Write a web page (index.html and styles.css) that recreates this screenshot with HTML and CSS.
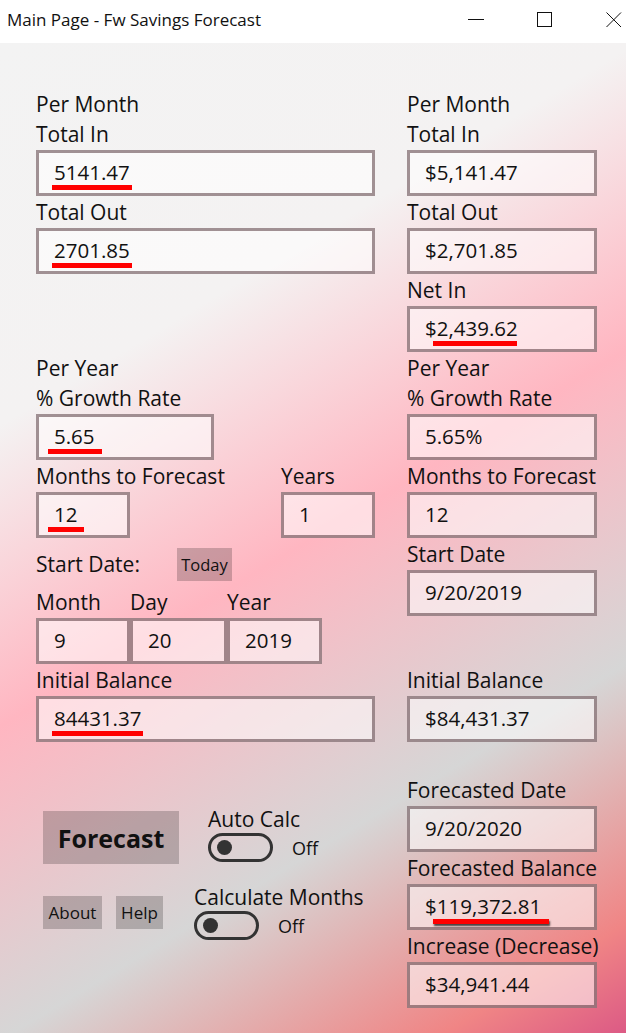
FILE: index.html
```html
<!DOCTYPE html>
<html lang="en">
<head>
    <meta charset="UTF-8">
    <meta name="viewport" content="width=device-width, initial-scale=1.0">
    <title>Main Page - Fw Savings Forecast</title>
    <link rel="stylesheet" href="styles.css">
</head>
<body>
    <div class="titlebar">
        <span class="title">Main Page - Fw Savings Forecast</span>
        <div class="controls">
            <svg width="16" height="16" viewBox="0 0 16 16"><path d="M0 7.5H16" stroke="#111" stroke-width="1"/></svg>
            <svg width="16" height="16" viewBox="0 0 16 16"><rect x="0.5" y="0.5" width="14" height="14" fill="none" stroke="#111" stroke-width="1"/></svg>
            <svg width="16" height="16" viewBox="0 0 16 16"><path d="M0.5 0.5L15 15M15 0.5L0.5 15" stroke="#111" stroke-width="1"/></svg>
        </div>
    </div>

    <main class="page">
        <!-- inputs -->
        <section class="col col-left">
            <div class="lbl">Per Month</div>
            <div class="lbl">Total In</div>
            <div class="field"><span class="mark">5141.47</span></div>
            <div class="lbl">Total Out</div>
            <div class="field"><span class="mark">2701.85</span></div>

            <div class="lbl gap-row">Per Year</div>
            <div class="lbl">% Growth Rate</div>
            <div class="field field-rate"><span class="mark mark-wide">5.65</span></div>

            <div class="split">
                <div>
                    <div class="lbl">Months to Forecast</div>
                    <div class="field field-small"><span class="mark mark-wide">12</span></div>
                </div>
                <div>
                    <div class="lbl">Years</div>
                    <div class="field field-small">1</div>
                </div>
            </div>

            <div class="start-row">
                <span class="start-lbl">Start Date:</span>
                <button class="btn btn-today">Today</button>
            </div>

            <div class="date-grid">
                <div class="lbl">Month</div>
                <div class="lbl">Day</div>
                <div class="lbl">Year</div>
                <div class="field">9</div>
                <div class="field">20</div>
                <div class="field">2019</div>
            </div>

            <div class="lbl">Initial Balance</div>
            <div class="field"><span class="mark">84431.37</span></div>

            <div class="actions">
                <button class="btn btn-forecast">Forecast</button>
                <div class="switch-group sg-auto">
                    <div class="lbl">Auto Calc</div>
                    <div class="switch"><span class="toggle"></span><span class="state">Off</span></div>
                </div>
            </div>
            <div class="actions actions-2">
                <button class="btn btn-small btn-about">About</button>
                <button class="btn btn-small btn-help">Help</button>
                <div class="switch-group sg-calc">
                    <div class="lbl">Calculate Months</div>
                    <div class="switch"><span class="toggle"></span><span class="state">Off</span></div>
                </div>
            </div>
        </section>

        <!-- results -->
        <section class="col col-right">
            <div class="lbl">Per Month</div>
            <div class="lbl">Total In</div>
            <div class="field">$5,141.47</div>
            <div class="lbl">Total Out</div>
            <div class="field">$2,701.85</div>
            <div class="lbl">Net In</div>
            <div class="field">$<span class="mark mark-tail">2,439.62</span></div>
            <div class="lbl">Per Year</div>
            <div class="lbl">% Growth Rate</div>
            <div class="field">5.65%</div>
            <div class="lbl">Months to Forecast</div>
            <div class="field">12</div>
            <div class="lbl">Start Date</div>
            <div class="field">9/20/2019</div>

            <div class="lbl gap-box">Initial Balance</div>
            <div class="field">$84,431.37</div>

            <div class="lbl gap-lbl">Forecasted Date</div>
            <div class="field">9/20/2020</div>
            <div class="lbl">Forecasted Balance</div>
            <div class="field">$<span class="mark mark-tail mark-shadow">119,372.81</span></div>
            <div class="lbl">Increase (Decrease)</div>
            <div class="field">$34,941.44</div>
        </section>
    </main>
</body>
</html>
```

FILE: styles.css
```css
body {
    margin: 0;
    font-family: "Open Sans", "Noto Sans", sans-serif;
    color: #111;
    overflow: hidden;
}
.titlebar {
    height: 43px;
    background-color: #fff;
    display: flex;
    align-items: center;
    justify-content: space-between;
}
.titlebar .title {
    font-size: 17px;
    margin-left: 7px;
    margin-top: -4px;
}
.titlebar .controls {
    display: flex;
    gap: 53px;
    margin-right: 4px;
    margin-top: -3px;
}
.page {
    height: 990px;
    box-sizing: border-box;
    padding: 47px 0 0 36px;
    display: flex;
    gap: 32px;
    background: linear-gradient(149deg, #f3f3f3 0%, #f4f2f2 28%, #ffb6c1 50%, #d6d6d6 73%, #f08585 92%, #dc5a85 100%);
}
.col {
    display: flex;
    flex-direction: column;
}
.col-left {
    width: 339px;
}
.col-right {
    width: 190px;
}
.lbl {
    height: 30px;
    line-height: 29px;
    font-size: 21px;
    white-space: nowrap;
}
.field {
    height: 46px;
    box-sizing: border-box;
    border: 3px solid rgba(70, 40, 45, 0.5);
    background-color: rgba(255, 255, 255, 0.55);
    margin-bottom: 2px;
    padding: 0 0 2px 15px;
    display: flex;
    align-items: center;
    font-size: 20.5px;
    white-space: nowrap;
}
.field-rate {
    width: 178px;
}
.field-small {
    width: 94px;
}
.gap-row {
    margin-top: 78px;
}
.gap-box {
    margin-top: 48px;
}
.gap-lbl {
    margin-top: 32px;
}
.mark {
    position: relative;
}
.mark::after {
    content: "";
    position: absolute;
    left: -2px;
    right: -2px;
    bottom: -4px;
    height: 5px;
    background-color: #f00;
}
.mark-wide::after {
    left: -6px;
    right: -7px;
}
.mark-tail::after {
    left: -4px;
    right: 1px;
}
.mark-shadow::after {
    right: -8px;
    box-shadow: 1px 2px 2px rgba(0, 0, 0, 0.7);
}
.split {
    display: flex;
    justify-content: space-between;
}
.start-row {
    height: 48px;
    display: flex;
    align-items: center;
    font-size: 21px;
}
.start-lbl {
    width: 141px;
}
.btn {
    font-family: inherit;
    color: #111;
    border: none;
    padding: 0;
    background-color: rgba(0, 0, 0, 0.2);
    cursor: pointer;
}
.btn-today {
    width: 55px;
    height: 33px;
    font-size: 16.5px;
}
.date-grid {
    display: grid;
    grid-template-columns: 94px 97px 95px;
}
.actions {
    display: flex;
    align-items: flex-start;
    margin-top: 61px;
}
.btn-forecast {
    margin: 6px 0 0 7px;
    width: 136px;
    height: 53px;
    font-size: 25px;
    font-weight: 700;
}
.sg-auto {
    margin-left: 29px;
}
.actions-2 {
    margin-top: 19px;
}
.btn-small {
    margin: 13px 0 0 7px;
    height: 33px;
    font-size: 17px;
}
.btn-about {
    width: 59px;
}
.btn-help {
    width: 47px;
    margin-left: 14px;
}
.sg-calc {
    margin-left: 31px;
}
.switch {
    display: flex;
    align-items: center;
    gap: 19px;
    margin-top: -2px;
}
.toggle {
    width: 65px;
    height: 29px;
    box-sizing: border-box;
    border: 3px solid #333;
    border-radius: 15px;
    position: relative;
}
.toggle::after {
    content: "";
    position: absolute;
    left: 6px;
    top: 4px;
    width: 15px;
    height: 15px;
    border-radius: 50%;
    background-color: #333;
}
.state {
    font-size: 18px;
}
```
